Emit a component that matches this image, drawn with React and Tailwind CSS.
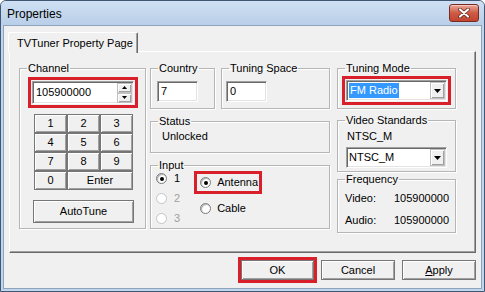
import React from "react";

const btn =
  "flex items-center justify-center border border-[#767676] bg-[#F0F0F0] shadow-[inset_1px_1px_0_#ffffff,inset_-1px_-1px_0_#A0A0A0]";
const sunken =
  "border border-t-[#A0A0A0] border-l-[#A0A0A0] border-r-white border-b-white bg-white shadow-[inset_1px_1px_0_#696969,inset_-1px_-1px_0_#E3E3E3]";
const group =
  "border border-[#B5B5B5] shadow-[1px_1px_0_#ffffff,inset_1px_1px_0_#ffffff]";

function Group({ label, className, children }) {
  return (
    <fieldset className={`${group} ${className}`}>
      <legend className="ml-[7px] px-[1px] text-[11px] leading-[13px]">{label}</legend>
      {children}
    </fieldset>
  );
}

function Radio({ checked, disabled }) {
  return (
    <span
      className={`flex h-[11px] w-[11px] shrink-0 items-center justify-center rounded-full border bg-white ${
        disabled ? "border-[#C4C4C4]" : "border-[#7A7A7A] shadow-[inset_1px_1px_1px_#B0B0B0]"
      }`}
    >
      {checked && <span className="h-[4px] w-[4px] rounded-full bg-black" />}
    </span>
  );
}

function DropArrow() {
  return (
    <span className={`${btn} h-[17px] w-[15px] border-[#C0C0C0]`}>
      <svg width="7" height="4" viewBox="0 0 7 4">
        <path d="M0 0h7L3.5 4z" fill="#000" />
      </svg>
    </span>
  );
}

function Key({ children, className = "w-[33px]" }) {
  return <div className={`${btn} h-[19px] ${className}`}>{children}</div>;
}

export default function App() {
  return (
    <div
      className="flex h-[292px] w-[485px] flex-col overflow-hidden rounded-t-[6px] border border-[#3F5675] bg-[#C1D5EB] text-[11px] leading-[13px] text-black"
      style={{ fontFamily: '"Liberation Sans", Arial, sans-serif' }}
    >
      {/* title bar */}
      <div className="flex h-[24px] shrink-0 items-center justify-between bg-gradient-to-b from-[#CFE0F3] to-[#B9CFE8] pl-[6px] pr-[5px]">
        <span className="pt-[2px] text-[12px]">Properties</span>
        <div className="flex h-[18px] w-[30px] items-center justify-center rounded-[3px] border border-[#7A2A20] bg-gradient-to-b from-[#E8A89A] via-[#CF5A43] to-[#C24430] shadow-[inset_0_1px_0_#F4C9BF]">
          <svg width="12" height="10" viewBox="0 0 12 10">
            <path d="M2 1.5l8 7M10 1.5l-8 7" stroke="#5A2018" strokeWidth="3.6" strokeLinecap="round" />
            <path d="M2 1.5l8 7M10 1.5l-8 7" stroke="#ffffff" strokeWidth="2.2" strokeLinecap="round" />
          </svg>
        </div>
      </div>

      {/* body */}
      <div className="mx-[2px] mb-[2px] flex flex-1 flex-col border border-[#8CA3C0] bg-[#F0F0F0] pl-[4px] pt-[6px]">
        <div className="relative z-10 -mb-[2px] flex h-[21px] w-[130px] items-center rounded-t-[2px] border-l border-t border-r border-l-white border-t-white border-r-[#696969] bg-[#F0F0F0] pl-[8px] shadow-[inset_-1px_0_0_#A0A0A0]">
          TVTuner Property Page
        </div>

        <div className="ml-[1px] flex h-[202px] w-[467px] border border-l-white border-t-white border-r-[#696969] border-b-[#696969] pl-[9px] pt-[10px] shadow-[inset_-1px_-1px_0_#A0A0A0]">
          {/* Channel */}
          <Group label="Channel" className="h-[167px] w-[127px]">
            <div className="ml-[8px] mt-[2px] w-[110px] border-[3px] border-[#D9202A] p-[1px]">
              <div className={`${sunken} flex h-[23px] items-center justify-between pl-[3px] pr-[1px]`}>
                <span>105900000</span>
                <div className="flex flex-col">
                  <span className={`${btn} h-[10px] w-[15px] border-[#C0C0C0]`}>
                    <svg width="5" height="3" viewBox="0 0 5 3">
                      <path d="M0 3h5L2.5 0z" fill="#000" />
                    </svg>
                  </span>
                  <span className={`${btn} h-[10px] w-[15px] border-[#C0C0C0]`}>
                    <svg width="5" height="3" viewBox="0 0 5 3">
                      <path d="M0 0h5L2.5 3z" fill="#000" />
                    </svg>
                  </span>
                </div>
              </div>
            </div>
            <div className="ml-[14px] mt-[6px] flex w-[99px] flex-wrap">
              {["1", "2", "3", "4", "5", "6", "7", "8", "9"].map((k) => (
                <Key key={k}>{k}</Key>
              ))}
              <Key>0</Key>
              <Key className="w-[66px]">Enter</Key>
            </div>
            <div className={`${btn} ml-[13px] mt-[10px] h-[23px] w-[101px]`}>AutoTune</div>
          </Group>

          {/* middle column */}
          <div className="ml-[4px] flex w-[180px] flex-col">
            <div className="flex gap-[6px]">
              <Group label="Country" className="h-[47px] w-[65px]">
                <div className={`${sunken} ml-[6px] mt-[6px] flex h-[21px] w-[41px] items-center pl-[3px]`}>7</div>
              </Group>
              <Group label="Tuning Space" className="h-[47px] w-[109px]">
                <div className={`${sunken} ml-[4px] mt-[6px] flex h-[21px] w-[41px] items-center pl-[3px]`}>0</div>
              </Group>
            </div>
            <Group label="Status" className="mt-[6px] h-[38px]">
              <div className="ml-[11px] mt-[2px]">Unlocked</div>
            </Group>
            <Group label="Input" className="mt-[6px] h-[70px]">
              <div className="flex">
                <div className="ml-[5px] flex flex-col gap-[7px] pt-[0px]">
                  <div className="flex items-center gap-[7px]">
                    <Radio checked />
                    <span>1</span>
                  </div>
                  <div className="flex items-center gap-[7px] text-[#A0A0A0]">
                    <Radio disabled />
                    <span>2</span>
                  </div>
                  <div className="flex items-center gap-[7px] text-[#A0A0A0]">
                    <Radio disabled />
                    <span>3</span>
                  </div>
                </div>
                <div className="ml-[14px] flex flex-col">
                  <div className="-mt-[1px] flex h-[23px] w-[68px] items-center gap-[6px] border-[3px] border-[#D9202A] pl-[3px]">
                    <Radio checked />
                    <span>Antenna</span>
                  </div>
                  <div className="ml-[6px] mt-[8px] flex items-center gap-[6px]">
                    <Radio />
                    <span>Cable</span>
                  </div>
                </div>
              </div>
            </Group>
          </div>

          {/* right column */}
          <div className="ml-[7px] flex w-[119px] flex-col">
            <Group label="Tuning Mode" className="h-[47px]">
              <div className="ml-[4px] mt-[1px] w-[109px] border-[3px] border-[#D9202A] p-[1px]">
                <div className={`${sunken} flex h-[21px] items-center justify-between pl-[2px] pr-[1px]`}>
                  <span className="bg-[#3399FF] px-[1px] py-[1px] text-white">FM Radio</span>
                  <DropArrow />
                </div>
              </div>
            </Group>
            <Group label="Video Standards" className="mt-[5px] h-[58px]">
              <div className="ml-[9px] mt-[3px]">NTSC_M</div>
              <div className={`${sunken} ml-[8px] mt-[4px] flex h-[21px] w-[101px] items-center justify-between pl-[2px] pr-[1px]`}>
                <span>NTSC_M</span>
                <DropArrow />
              </div>
            </Group>
            <Group label="Frequency" className="mt-[1px] h-[60px]">
              <div className="ml-[7px] mr-[6px] mt-[6px] flex flex-col gap-[9px]">
                <div className="flex justify-between">
                  <span>Video:</span>
                  <span>105900000</span>
                </div>
                <div className="flex justify-between">
                  <span>Audio:</span>
                  <span>105900000</span>
                </div>
              </div>
            </Group>
          </div>
        </div>

        {/* dialog buttons */}
        <div className="mt-[4px] flex items-center justify-end pr-[5px]">
          <div className="border-[3px] border-[#D9202A]">
            <div className={`${btn} h-[20px] w-[73px]`}>OK</div>
          </div>
          <div className={`${btn} ml-[4px] h-[20px] w-[74px]`}>Cancel</div>
          <div className={`${btn} ml-[7px] h-[20px] w-[74px]`}>
            <span>
              <span className="underline underline-offset-1">A</span>pply
            </span>
          </div>
        </div>
      </div>
    </div>
  );
}
